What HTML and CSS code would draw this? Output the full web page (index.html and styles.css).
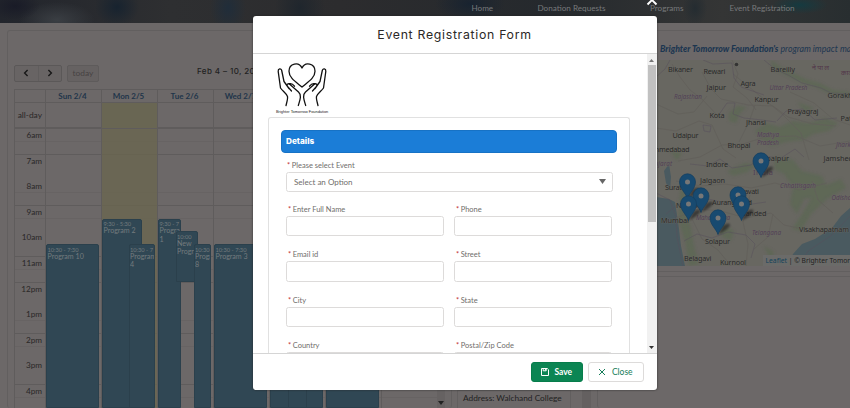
FILE: index.html
```html
<!DOCTYPE html>
<html lang="en">
<head>
<meta charset="utf-8">
<title>Event Registration</title>
<link rel="stylesheet" href="styles.css">
</head>
<body>
<header class="site-nav">
  <a class="n1">Home</a><a class="n2">Donation Requests</a><a class="n3">Programs</a><a class="n4">Event Registration</a>
</header>
<main class="page">
  <section class="panel calendar">
    <div class="toolbar">
      <div class="pager">
        <button><svg width="8" height="8" viewBox="0 0 8 8"><path d="M5.6 1 2.6 4l3 3"/></svg></button>
        <button><svg width="8" height="8" viewBox="0 0 8 8"><path d="M2.4 1l3 3-3 3"/></svg></button>
      </div>
      <button class="today">today</button>
      <h2>Feb 4 – 10, 2024</h2>
    </div>
    <div class="table">
      <div class="row head"><i></i><b>Sun 2/4</b><b>Mon 2/5</b><b>Tue 2/6</b><b>Wed 2/7</b><b>Thu 2/8</b><b>Fri 2/9</b><b>Sat 2/10</b></div>
      <div class="row allday"><span>all-day</span><i></i><i class="now"></i><i></i><i></i><i></i><i></i><i></i></div>
      <div class="slots">
        <div class="hours"><span>6am</span><span>7am</span><span>8am</span><span>9am</span><span>10am</span><span>11am</span><span>12pm</span><span>1pm</span><span>2pm</span><span>3pm</span><span>4pm</span></div>
        <div class="day"><div class="ev e1"><small>10:30 - 7:30</small>Program 10</div></div>
        <div class="day now"><div class="ev e2"><small>9:30 - 5:30</small>Program 2</div><div class="ev e3"><small>10:30 - 7</small>Program 4</div></div>
        <div class="day"><div class="ev e4"><small>9:30 - 7</small>Program 1</div><div class="ev e5"><small>10:00</small>New Program</div><div class="ev e6"><small>10:30</small>Program 8</div></div>
        <div class="day"><div class="ev e1"><small>10:30 - 7:30</small>Program 3</div></div>
        <div class="day"><div class="ev e1"></div><div class="ev e7"></div></div>
        <div class="day"><div class="ev e1"></div></div>
        <div class="day"></div>
        <div class="cal-scroll"><svg width="6" height="4" viewBox="0 0 6 4"><path d="M0 0h6L3 4z"/></svg></div>
      </div>
    </div>
  </section>
  <section class="details"><div class="address">Address: Walchand College</div></section>
  <section class="impact">
    <div class="panel map-card">
      <h3><b>Brighter Tomorrow Foundation's</b> program impact map</h3>
      <svg class="map" width="194" height="206" viewBox="656 60 194 206">
        <defs>
          <filter id="soft" x="-30%" y="-30%" width="160%" height="160%"><feGaussianBlur stdDeviation="1.5"/></filter>
          <g id="pin"><path class="shade" d="M0 0 5-9q7-4 7 0Q9-4 0 0z"/><path class="pin" d="M0 0C-1.500-5-8-10-8-16.500a8 8.200 0 0 1 16 0C8-10 1.500-5 0 0z"/><circle class="hole" cy="-16.500" r="2.500"/></g>
        </defs>
        <path class="land" d="M656 60h194v206H656z"/>
        <g class="green" filter="url(#soft)">
          <path d="M771 60l10 7 14 7 13 6 12 3 13 7 17 2v5l-18-2-14-7-16-5-14-7-16-8z"/>
          <path d="M729 113l8-7 10 1-7 6-4 10-7-2zM755 131l11-8 14 4 12-6 16 2 18-5 12 5-9 8-15 3-11 6-17 2-14 4-9-5z"/>
          <path d="M727 171l18-8 11 2-9 7-14 4zM775 157l18 3 9 11 20 5 5 12-10 9-13 2-7 15-7-10 3-17-9-13-10-5zM812 197l14-12 15-6 5 9-19 11-16 15-10 17-9-2 10-15z"/>
          <path d="M681 184l5 8-2 17 7 19 3 18 5 18-10 2-4-25-7-22zM720 222l14 9-3 10-10-5zM670 150l12 3-5 8zM764 246l10 6-3 9zM797 102l17 6-9 4z"/>
        </g>
        <path class="sea" d="M656 197l13 2 6 3 2 13 2 14 2 17 4 20h-29zM664 171l5-7 2 13-1 13-4-7zM850 208l-9 8-9 12-17 11-13 5-9 10-5 12h62z"/>
        <path class="bound" d="M656 193l14 7 6 17 1 20 6 29M850 216l-18 19-24 16-9 15M656 77l9-8 5-9"/>
        <path class="road" d="M672 64l8 13 10 13 12 9 14 15M702 72l9 17 10 10 27 6 25 1 15 11 25 7 23 2M732 60l6 14-5 13 14 11 9 12M733 74l21 17 28 23 19 19 8 27M656 128l20 3 23-10 13 4 11 24 13 9M678 161l22-4 22-12 21-1 22-7 31-1 24 10 30-5M676 181l25 5 24-2 26 4 24-5 24 7 28-7M676 218l22-9 23 2 25 7 25-5 13 12 14 3M692 219l10 20 16 11 13 16M750 195l-7 27 5 22-2 22M773 214l-5 23-14 12M790 92l24 11 19 16 17 6M656 104l22 10 16-2 13-16M739 142l10-20 6-17M812 181l6 19 15 13"/>
        <path class="bound" d="M764 60l11 9 13 6 14 8 19 5 10 5 19 1M703 60l10 4 19-1 2 15 7 9 23 8M718 116l9-13 8 0-2 11 11 4 18 2 14 2M703 125l8 1-1 6-6-1zM690 164l18 2 12-7 12 9 19-3 13-9 17 2 14-9 9 8M777 121l9-10 17-2 12 11 22-2M666 214l12-10 18 4 12-9 22 5 12-5 10 5 14-2M684 241l13-7 15 4 16-6 18 3 9 9-4 14"/>
        <circle class="delhi" cx="736.500" cy="64.500" r="1.800"/>
        <g class="town">
          <text x="668" y="71.500" textLength="25">Bikaner</text><text x="703.500" y="73.500" textLength="22">Rewari</text><text x="770.500" y="71.500" textLength="24.500">Bareilly</text>
          <text x="706.500" y="89.500" textLength="19.500">Jaipur</text><text x="740.500" y="85.500" textLength="15">Agra</text><text x="754.500" y="102" textLength="24">Kanpur</text><text x="827.500" y="97.500">Gorakhpur</text>
          <text x="709.500" y="117.500" textLength="15">Kota</text><text x="746" y="124.500" textLength="20">Jhansi</text><text x="787.500" y="113.500" textLength="31">Prayagraj</text><text x="840.500" y="120.500">Patna</text>
          <text x="672.500" y="137.500" textLength="26">Udaipur</text><text x="650.500" y="151.500" textLength="39">Ahmedabad</text><text x="727.500" y="147.500" textLength="23">Bhopal</text><text x="706" y="166.500" textLength="22">Indore</text><text x="760" y="160.500" textLength="29">Jabalpur</text><text x="823.500" y="160.500">Jamshedpur</text>
          <text x="665" y="190" textLength="17">Surat</text><text x="700" y="182.500" textLength="25">Jalgaon</text><text x="676" y="207.500">Nashik</text><text x="712" y="205" textLength="40">Aurangabad</text><text x="731" y="194" textLength="28">Amravati</text><text x="740" y="216" textLength="26.500">Nanded</text>
          <text x="661" y="222.500" textLength="28">Mumbai</text><text x="705" y="243.500" textLength="25">Solapur</text><text x="684" y="260.500" textLength="27.500">Belagavi</text><text x="720" y="265" textLength="26">Kurnool</text><text x="799" y="232" textLength="50">Visakhapatnam</text>
        </g>
        <g class="state">
          <text x="674" y="98.500" textLength="28">Rajasthan</text><text x="769.500" y="90" textLength="38">Uttar Pradesh</text><text x="757" y="137" textLength="22">Madhya</text><text x="757" y="144.500" textLength="22">Pradesh</text><text x="836" y="147">Jharkhand</text><text x="650" y="165.500" textLength="22">Gujarat</text><text x="780" y="187.500" textLength="36">Chhattisgarh</text><text x="831.500" y="199.500">Odisha</text><text x="696" y="220" textLength="34">Maharashtra</text><text x="752" y="234.500" textLength="29">Telangana</text><text x="753" y="175" textLength="20" class="country">India</text>
          <text class="np" x="812" y="70" textLength="17">नेपाल</text><text class="np" x="841" y="75">काठमाडौं</text>
        </g>
        <g><use href="#pin" x="761" y="177.500"/><use href="#pin" x="687.500" y="198.500"/><use href="#pin" x="701" y="212.500"/><use href="#pin" x="738" y="211.500"/><use href="#pin" x="688.500" y="220.500"/><use href="#pin" x="741.500" y="220.500"/><use href="#pin" x="718" y="234.500"/></g>
        <path class="credit-bg" d="M763 255h87v11h-87z"/>
        <text class="credit" x="765.500" y="262.500"><tspan class="link">Leaflet</tspan> | © Brighter Tomorrow</text>
      </svg>
    </div>
    <div class="panel rest"></div>
  </section>
</main>

<div class="overlay">
  <div class="modal">
    <svg class="dismiss" width="12" height="12" viewBox="0 0 12 12"><path d="M1.500 1.500l9 9m0-9l-9 9"/></svg>
    <div class="modal-head">Event Registration Form</div>
    <div class="modal-main">
      <div class="modal-body">
        <div class="logo">
          <svg width="50" height="46" viewBox="0 0 50 46"><path d="M25 24C19 19 12 15 12 8.200c0-8 10-10 13-3.200C28-1.800 38 .2 38 8.200 38 15 31 19 25 24z"/><path id="hand" d="M9 42.500c1-4 2-7 1.500-9-1-3-5-5.500-7-8.500L1.200 8.500c-.3-3 3-3.500 3.500-1l2.300 11 5 7M14.500 28l-4-4.500c-1.500-2.500 1-3.500 2.500-2l8.500 7.500c3.500 3 1.500 8-.2 13.500M12.500 20.700c2-.5 3.500.5 5 2.500"/><use href="#hand" transform="matrix(-1 0 0 1 50 0)"/></svg>
          <span>Brighter Tomorrow Foundation</span>
        </div>
        <div class="form">
          <div class="section-title">Details</div>
          <label class="f wide"><span><em>*</em>Please select Event</span><div class="box select">Select an Option<svg width="7" height="5" viewBox="0 0 7 5"><path d="M0 0h7L3.500 5z"/></svg></div></label>
          <div class="fields">
            <label class="f"><span><em>*</em>Enter Full Name</span><div class="box"></div></label>
            <label class="f"><span><em>*</em>Phone</span><div class="box"></div></label>
            <label class="f"><span><em>*</em>Email id</span><div class="box"></div></label>
            <label class="f"><span><em>*</em>Street</span><div class="box"></div></label>
            <label class="f"><span><em>*</em>City</span><div class="box"></div></label>
            <label class="f"><span><em>*</em>State</span><div class="box"></div></label>
            <label class="f"><span><em>*</em>Country</span><div class="box"></div></label>
            <label class="f"><span><em>*</em>Postal/Zip Code</span><div class="box"></div></label>
          </div>
        </div>
      </div>
      <div class="scrollbar"><svg class="up" width="5" height="3" viewBox="0 0 5 3"><path d="M0 3h5L2.500 0z"/></svg><div class="thumb"></div><svg class="down" width="5" height="3" viewBox="0 0 5 3"><path d="M0 0h5L2.500 3z"/></svg></div>
    </div>
    <div class="modal-foot">
      <button class="save"><svg width="8" height="8" viewBox="0 0 8 8"><path d="M.5.5h5.800L7.500 1.700v5.800h-7zM2.200.500v2.300h3V.5M4.400.8v1.500"/></svg>Save</button>
      <button class="close"><svg width="8" height="8" viewBox="0 0 8 8"><path d="M1 1l6 6m0-6L1 7"/></svg>Close</button>
    </div>
  </div>
</div>
</body>
</html>
```
FILE: styles.css
```css
* { box-sizing: border-box; }
body { margin: 0; width: 850px; height: 408px; overflow: hidden; background: #6c6868; font-family: Lato, sans-serif; position: relative; }
button { font-family: inherit; margin: 0; padding: 0; display: flex; align-items: center; justify-content: center; }
svg { display: block; flex: none; }

.site-nav { height: 23px; display: flex; padding-left: 471.500px; font-size: 8.150px; line-height: 17px; color: #77797b; white-space: nowrap; overflow: hidden;
  background:
    radial-gradient(ellipse 25px 14px at 15px 6px, #191b27, transparent),
    radial-gradient(ellipse 38px 18px at 57px 20px, #3a3e43, transparent),
    radial-gradient(ellipse 22px 20px at 117px 7px, #17232f, transparent),
    radial-gradient(ellipse 18px 26px at 228px 8px, #202d3a, transparent),
    radial-gradient(ellipse 25px 30px at 300px 8px, #1f262d, transparent),
    radial-gradient(ellipse 35px 17px at 470px 4px, #182330, transparent),
    radial-gradient(ellipse 12px 18px at 695px 8px, #242c31, transparent),
    radial-gradient(ellipse 28px 9px at 800px 5px, #153a40, transparent),
    linear-gradient(90deg, #22252c, #2e2f31 20%, #2c2c2e 40%, #25292d 65%, #343535 85%, #282e30); }
.site-nav a { flex: none; }
.n1 { width: 66px; }
.n2 { width: 112.500px; }
.n3 { width: 79.500px; }

.page { display: flex; align-items: flex-start; height: 385px; overflow: hidden; padding: 7px 0 0 7px; }
.panel { border: 1px solid #625f5f; border-radius: 3px; }
.calendar { width: 445px; height: 378px; padding: 33px 0 0 6px; flex: none; overflow: hidden; border-bottom: 0; }
.toolbar { display: flex; align-items: center; height: 18px; }
.pager { display: flex; width: 48px; height: 17px; border: 1px solid #5b5858; border-radius: 2px; background: #686464; }
.pager button { flex: 1; border: 0; background: none; }
.pager button + button { border-left: 1px solid #605d5d; }
.pager path { fill: none; stroke: #171717; stroke-width: 1.400; }
.today { width: 32px; height: 17px; margin-left: 5px; border: 1px solid #5e5b5b; border-radius: 2px; background: #666262; color: #464343; font-size: 8.400px; }
.toolbar h2 { margin: -4px 0 0 98px; font: 500 8px Inter, sans-serif; letter-spacing: .4px; color: #222; white-space: nowrap; }
.table { margin-top: 6.500px; width: 431px; border: 1px solid #5f5c5c; border-right: 0; }
.row { display: grid; grid-template-columns: 29.500px repeat(7, 56px); }
.row > * + * { border-left: 1px solid #5f5c5c; }
.head { height: 13px; color: #1f354a; font-size: 8px; line-height: 13px; text-align: center; border-bottom: 1px solid #5f5c5c; }
.head b { font-weight: 700; padding-right: 1px; }
.allday { height: 26.500px; border-bottom: 2px solid #5f5c5c; font-size: 8.400px; line-height: 25px; color: #292727; }
.allday span { text-align: right; padding-right: 2.500px; }
.now { background: #696653; }
.slots { height: 279px; display: grid; grid-template-columns: 29.500px repeat(7, 56px) 9.500px; overflow: hidden; background: repeating-linear-gradient(#6c6868 0 12.300px, #676363 12.300px 12.800px, #6c6868 12.800px 25px, #5f5c5c 25px 25.600px); }
.hours span { display: block; height: 25.600px; padding-right: 2.500px; text-align: right; font-size: 8.200px; line-height: 12.500px; color: #292727; }
.hours span:last-child { height: 20px; }
.day { position: relative; border-left: 1px solid #5f5c5c; }
.day.now { background: rgba(105,102,78,.75); }
.ev { position: absolute; bottom: 0; padding: .5px 0 0 .5px; overflow: hidden; background: #304754; border: 1px solid #2b404c; border-radius: 2px 2px 0 0; color: #747b7e; font-size: 7.100px; line-height: 8.500px; }
.ev small { display: block; font-size: 5.700px; line-height: 7px; white-space: nowrap; }
.e1 { left: .5px; width: 53px; top: 115px; }
.e2 { left: .5px; width: 40px; top: 89.500px; }
.e3 { left: 27px; width: 26.500px; top: 115px; }
.e4 { left: .5px; width: 23px; top: 89.500px; }
.e5 { left: 18px; width: 22.500px; top: 102px; bottom: auto; height: 51px; }
.e6 { left: 36px; width: 17.500px; top: 115px; }
.e7 { left: 18px; width: 19px; top: 115px; }
.cal-scroll { background: #666262; display: flex; align-items: flex-end; justify-content: center; padding-bottom: 3px; }
.cal-scroll path { fill: #222; }
.details { width: 134px; height: 378px; flex: none; margin-left: 5px; display: flex; align-items: flex-start; border-right: 9px solid #646060; }
.address { width: 114px; height: 18px; margin-top: 360px; border: 1px solid #625f5f; border-bottom: 0; padding-left: 5px; line-height: 15px; font-size: 8.300px; color: #222; white-space: nowrap; }
.impact { width: 259px; flex: none; margin-left: 6px; margin-right: -7px; }
.map-card { height: 242px; padding-left: 58px; overflow: hidden; border-right: 0; }
.map-card h3 { margin: 0; height: 29px; padding: 10px 0 0 4px; font: italic 400 8.750px/16px Lato, sans-serif; color: #1c3650; white-space: nowrap; }
.map-card h3 b { font-weight: 900; }
.rest { height: 132px; margin-top: 4px; border-bottom: 0; border-right: 0; }

.land { fill: #686761; }
.green { fill: #5c6753; opacity: .75; }
.sea { fill: #4a5a60; }
.bound { fill: none; stroke: #58515c; stroke-width: .7; opacity: .75; }
.road { fill: none; stroke: #62605a; stroke-width: .8; }
.delhi { fill: #333; }
.town, .state { font: 7.300px "Noto Sans", sans-serif; fill: #292929; paint-order: stroke; stroke: #6b6a64; stroke-width: .7; }
.state { font-size: 6.300px; font-style: italic; fill: #503e54; }
.state .country { font-size: 7.500px; font-style: normal; }
.np { font-size: 7px; font-style: normal; fill: #503448; }
.shade { fill: #222; opacity: .65; filter: blur(1.200px); }
.pin { fill: #184a70; stroke: #143e5e; stroke-width: .7; }
.hole { fill: #777; }
.credit-bg { fill: #6b6b69; }
.credit { font: 6.750px "Noto Sans", sans-serif; fill: #222; }
.link { fill: #14435b; }

.overlay { position: absolute; inset: 0; padding: 16px 0 0 252.500px; }
.modal { position: relative; width: 404px; height: 373.500px; background: #fff; border-radius: 3px; display: flex; flex-direction: column; box-shadow: 0 0 2px #222; }
.dismiss { position: absolute; right: -1px; top: -22px; }
.dismiss path { fill: none; stroke: #fff; stroke-width: 1.900; }
.modal-head { height: 38px; flex: none; border-bottom: 1px solid #d5d5d5; text-align: center; font: 400 12.300px/37px Inter, sans-serif; letter-spacing: .7px; color: #2b2826; }
.modal-main { height: 300px; flex: none; display: flex; overflow: hidden; border-bottom: 1px solid #d5d5d5; }
.modal-body { width: 394px; padding: 9px 16.500px 0 15.500px; }
.logo { width: 52px; margin-left: 8px; height: 54px; }
.logo svg { width: 50px; height: 46px; margin-left: 1px; fill: none; stroke: #111; stroke-width: 1.300; stroke-linecap: round; stroke-linejoin: round; }
.logo span { display: block; font: 3.900px/5px "Liberation Sans", sans-serif; color: #222; white-space: nowrap; }
.form { height: 237px; overflow: hidden; border: 1px solid #e1e1e1; border-bottom: 0; border-radius: 3px 3px 0 0; padding: 12px 12.500px 0 12px; }
.section-title { height: 22.500px; border-radius: 4px; background: #1b7dd7; border: 1px solid #1772c5; color: #fff; font: 800 8.200px/20px Inter, sans-serif; padding-left: 4px; }
.f { display: block; font-size: 7.500px; color: #706e6b; }
.f > span { display: block; height: 11px; line-height: 10px; padding-left: 2px; }
.f em { font-style: normal; color: #c23934; margin-right: 1.500px; }
.wide { margin: 8px 4px 0 5px; }
.wide > span { padding-left: 1px; }
.box { height: 20.500px; border: 1px solid #dddbda; border-radius: 2.500px; background: #fff; }
.select { display: flex; align-items: center; justify-content: space-between; padding: 0 6px 0 7px; font-size: 8px; }
.select path { fill: #666; }
.fields { margin: 12.500px 5px 0; display: grid; grid-template-columns: 158px 158px; column-gap: 10px; row-gap: 14px; }
.scrollbar { width: 10px; background: #f1f1f1; display: flex; flex-direction: column; align-items: center; }
.up { margin: 5px 0 3px; fill: #777; }
.thumb { width: 8px; height: 157px; background: #c1c1c1; }
.down { margin: auto 0 4px; fill: #333; }
.modal-foot { flex: 1; display: flex; justify-content: flex-end; align-items: center; gap: 5px; padding-right: 13px; }
.modal-foot button { height: 20px; border-radius: 3px; gap: 5.500px; font-size: 8.500px; }
.modal-foot svg { fill: none; stroke: currentColor; stroke-width: 1; }
.save { width: 52px; border: 1px solid #077d4b; background: #0b8553; color: #fff; font-weight: 700; }
.close { width: 56px; border: 1px solid #dddbda; background: #fff; color: #167d5a; }
```
